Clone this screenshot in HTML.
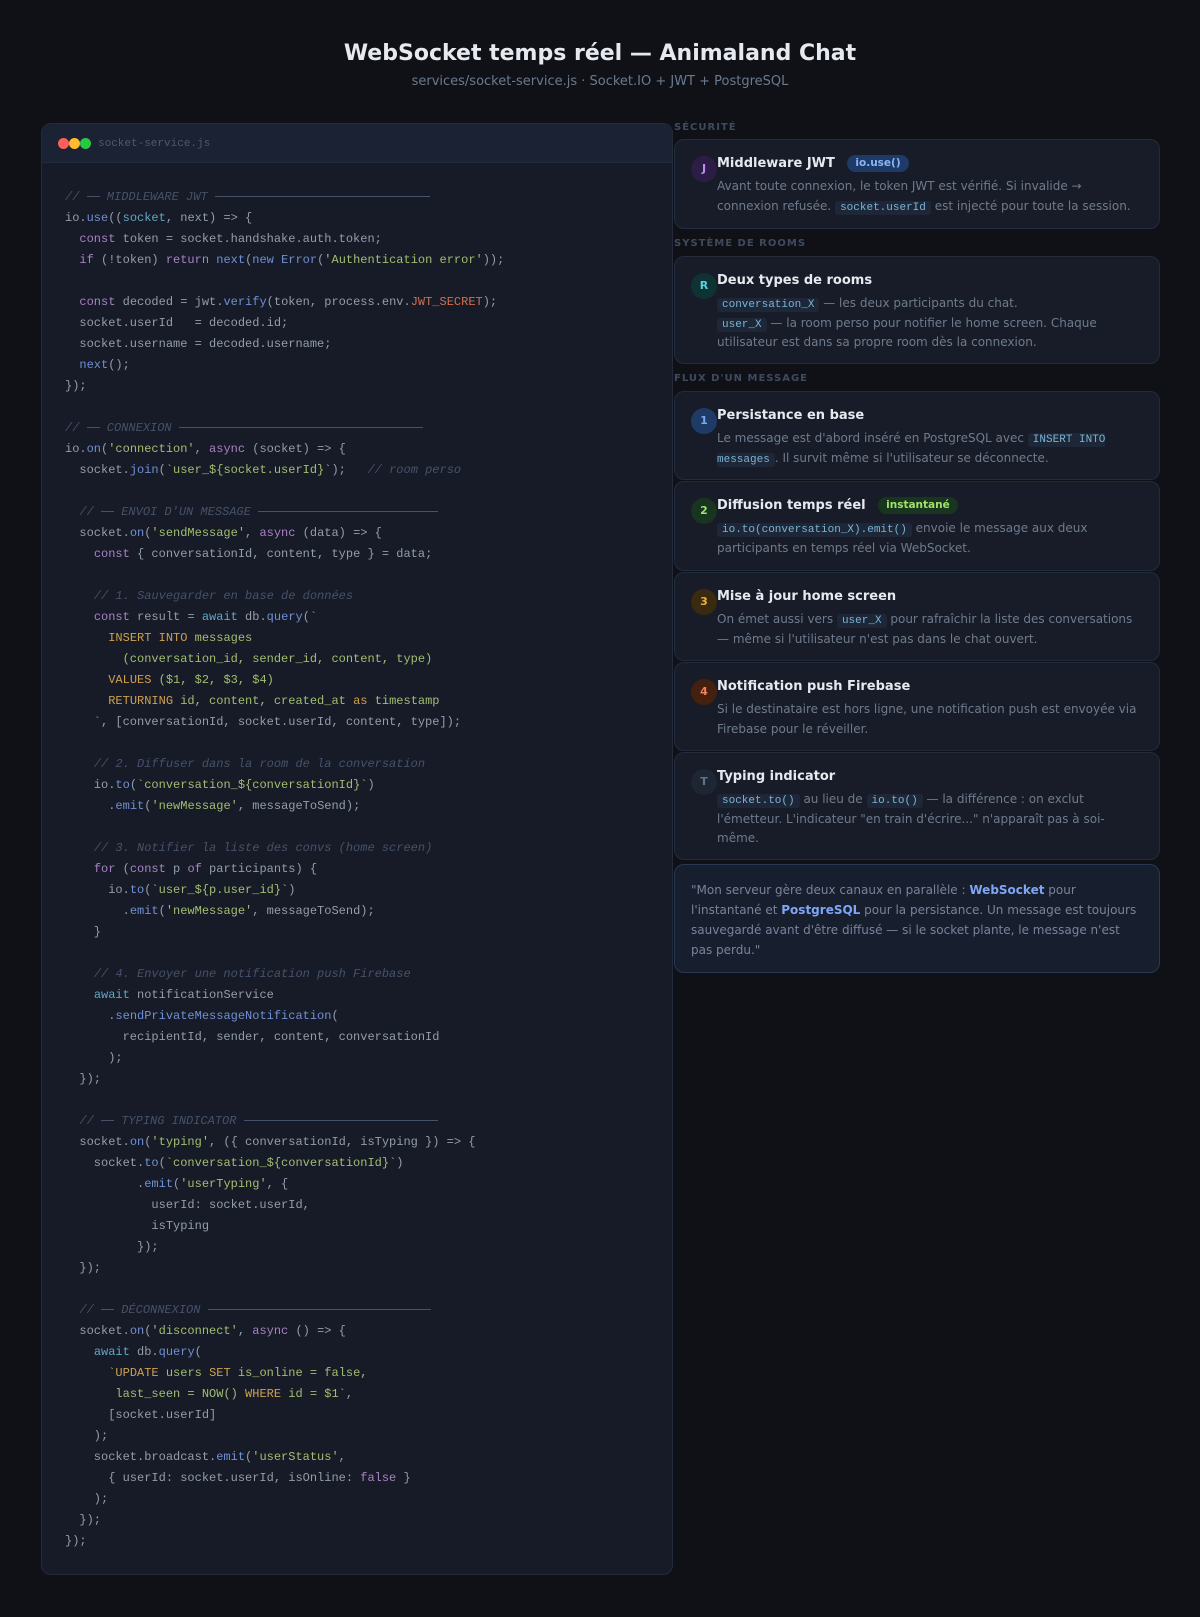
<!DOCTYPE html>
<html><head><meta charset="utf-8">
<style>
*{margin:0;padding:0;box-sizing:border-box}
body{width:1200px;height:1617px;background:#0f1117;font-family:"DejaVu Sans","Liberation Sans",sans-serif;position:relative;overflow:hidden}
h1{position:absolute;top:39px;left:0;width:1200px;text-align:center;font-size:22px;font-weight:bold;color:#e6e9ef;line-height:30px}
.sub{position:absolute;top:73px;left:0;width:1200px;text-align:center;font-size:13px;color:#6b7a8f;line-height:18px}
.code{position:absolute;left:41px;top:123px;width:632px;height:1452px;background:#161b27;border:1px solid #232b3a;border-radius:10px;overflow:hidden}
.hd{height:39px;background:#1a2233;border-bottom:1px solid #222c3d;position:relative}
.dot{position:absolute;top:14px;width:11px;height:11px;border-radius:50%}
.fn{position:absolute;left:56px;top:12px;font-family:"Liberation Mono",monospace;font-size:11px;color:#4b5a6e;line-height:17px}
pre{position:absolute;left:23px;top:63px;font-family:"Liberation Mono",monospace;font-size:12px;line-height:21px;color:#949dab}
.k{color:#a882c4}.f{color:#7090d4}.s{color:#a3bd70}.q{color:#cfa050}.c{color:#46526a;font-style:italic}.v{color:#62a6c4}.r{color:#d06e52}
.ln{display:inline-block;height:1px;background:#46526a;vertical-align:middle}
.lab{position:absolute;left:674px;font-size:10px;font-weight:bold;letter-spacing:1px;color:#3f4b5d;line-height:12px}
.card{position:absolute;left:674px;width:486px;background:#171c28;border:1px solid #232c3b;border-radius:10px;padding:14px 16px 0 42px}
.av{position:absolute;left:16px;top:16px;width:26px;height:26px;border-radius:50%;font-size:11px;font-weight:bold;text-align:center;line-height:26px}
.t{font-size:13px;font-weight:bold;color:#e6e9ef;line-height:20px;height:20px;margin-bottom:3px;white-space:nowrap}
.d{font-size:12px;color:#6f7b8d;line-height:19.5px}
.b{display:inline-block;font-size:10.5px;font-weight:bold;padding:0 8px;border-radius:9px;line-height:17px;margin-left:8px;vertical-align:1px}
code{font-family:"Liberation Mono",monospace;font-size:11px;background:#1e2738;color:#78b4d4;padding:1px 5px;border-radius:3px;line-height:1}
.quote{position:absolute;left:674px;top:864px;width:486px;height:109px;background:#171e2e;border:1px solid #2a3752;border-radius:10px;padding:15px 16px;font-size:12px;line-height:20px;color:#78849a}
.quote b{color:#7fa6f5}
</style></head><body>
<h1>WebSocket temps réel — Animaland Chat</h1>
<div class="sub">services/socket-service.js · Socket.IO + JWT + PostgreSQL</div>

<div class="code">
<div class="hd"><span class="dot" style="left:16px;background:#ff5f57"></span><span class="dot" style="left:27px;background:#febc2e"></span><span class="dot" style="left:38px;background:#28c840"></span><span class="fn">socket-service.js</span></div>
<pre><span class="c">// <span class="ln" style="width:13px"></span> MIDDLEWARE JWT <span class="ln" style="width:215px"></span></span>
io.<span class="f">use</span>((<span class="v">socket</span>, next) =&gt; {
  <span class="k">const</span> token = socket.handshake.auth.token;
  <span class="k">if</span> (!token) <span class="k">return</span> <span class="f">next</span>(<span class="f">new</span> <span class="f">Error</span>(<span class="s">'Authentication error'</span>));

  <span class="k">const</span> decoded = jwt.<span class="f">verify</span>(token, process.env.<span class="r">JWT_SECRET</span>);
  socket.userId   = decoded.id;
  socket.username = decoded.username;
  <span class="f">next</span>();
});

<span class="c">// <span class="ln" style="width:13px"></span> CONNEXION <span class="ln" style="width:244px"></span></span>
io.<span class="f">on</span>(<span class="s">'connection'</span>, <span class="k">async</span> (socket) =&gt; {
  socket.<span class="f">join</span>(<span class="s">`user_${socket.userId}`</span>);   <span class="c">// room perso</span>

  <span class="c">// <span class="ln" style="width:13px"></span> ENVOI D'UN MESSAGE <span class="ln" style="width:180px"></span></span>
  socket.<span class="f">on</span>(<span class="s">'sendMessage'</span>, <span class="k">async</span> (data) =&gt; {
    <span class="k">const</span> { conversationId, content, type } = data;

    <span class="c">// 1. Sauvegarder en base de données</span>
    <span class="k">const</span> result = <span class="v">await</span> db.<span class="f">query</span>(`
      <span class="q">INSERT INTO</span> <span class="s">messages</span>
        <span class="s">(conversation_id, sender_id, content, type)</span>
      <span class="q">VALUES</span> <span class="s">($1, $2, $3, $4)</span>
      <span class="q">RETURNING</span> <span class="s">id, content, created_at</span> <span class="q">as</span> <span class="s">timestamp</span>
    `, [conversationId, socket.userId, content, type]);

    <span class="c">// 2. Diffuser dans la room de la conversation</span>
    io.<span class="f">to</span>(<span class="s">`conversation_${conversationId}`</span>)
      .<span class="f">emit</span>(<span class="s">'newMessage'</span>, messageToSend);

    <span class="c">// 3. Notifier la liste des convs (home screen)</span>
    <span class="k">for</span> (<span class="k">const</span> p <span class="k">of</span> participants) {
      io.<span class="f">to</span>(<span class="s">`user_${p.user_id}`</span>)
        .<span class="f">emit</span>(<span class="s">'newMessage'</span>, messageToSend);
    }

    <span class="c">// 4. Envoyer une notification push Firebase</span>
    <span class="v">await</span> notificationService
      .<span class="f">sendPrivateMessageNotification</span>(
        recipientId, sender, content, conversationId
      );
  });

  <span class="c">// <span class="ln" style="width:13px"></span> TYPING INDICATOR <span class="ln" style="width:194px"></span></span>
  socket.<span class="f">on</span>(<span class="s">'typing'</span>, ({ conversationId, isTyping }) =&gt; {
    socket.<span class="f">to</span>(<span class="s">`conversation_${conversationId}`</span>)
          .<span class="f">emit</span>(<span class="s">'userTyping'</span>, {
            userId: socket.userId,
            isTyping
          });
  });

  <span class="c">// <span class="ln" style="width:13px"></span> DÉCONNEXION <span class="ln" style="width:223px"></span></span>
  socket.<span class="f">on</span>(<span class="s">'disconnect'</span>, <span class="k">async</span> () =&gt; {
    <span class="v">await</span> db.<span class="f">query</span>(
      <span class="s">`</span><span class="q">UPDATE</span> <span class="s">users</span> <span class="q">SET</span> <span class="s">is_online = false,</span>
       <span class="s">last_seen = NOW()</span> <span class="q">WHERE</span> <span class="s">id = $1`</span>,
      [socket.userId]
    );
    socket.broadcast.<span class="f">emit</span>(<span class="s">'userStatus'</span>,
      { userId: socket.userId, isOnline: <span class="k">false</span> }
    );
  });
});</pre>
</div>

<div class="lab" style="top:122px">SÉCURITÉ</div>
<div class="card" style="top:139px;height:90px"><div class="av" style="background:#2b1d45;color:#c28cf0">J</div>
<div class="t">Middleware JWT <span class="b" style="background:#1e3a66;color:#8ab4f8">io.use()</span></div>
<div class="d">Avant toute connexion, le token JWT est vérifié. Si invalide → connexion refusée. <code>socket.userId</code> est injecté pour toute la session.</div></div>

<div class="lab" style="top:238px">SYSTÈME DE ROOMS</div>
<div class="card" style="top:256px;height:108px"><div class="av" style="background:#0f3232;color:#5ecfe0">R</div>
<div class="t">Deux types de rooms</div>
<div class="d"><code>conversation_X</code> — les deux participants du chat.<br><code>user_X</code> — la room perso pour notifier le home screen. Chaque utilisateur est dans sa propre room dès la connexion.</div></div>

<div class="lab" style="top:373px">FLUX D'UN MESSAGE</div>
<div class="card" style="top:391px;height:89px"><div class="av" style="background:#1e3a66;color:#7aaaf0">1</div>
<div class="t">Persistance en base</div>
<div class="d">Le message est d'abord inséré en PostgreSQL avec <code>INSERT INTO messages</code>. Il survit même si l'utilisateur se déconnecte.</div></div>

<div class="card" style="top:481px;height:90px"><div class="av" style="background:#17351f;color:#9be070">2</div>
<div class="t">Diffusion temps réel <span class="b" style="background:#17351f;color:#a3e06a">instantané</span></div>
<div class="d"><code>io.to(conversation_X).emit()</code> envoie le message aux deux participants en temps réel via WebSocket.</div></div>

<div class="card" style="top:572px;height:89px"><div class="av" style="background:#3a2a10;color:#f0b040">3</div>
<div class="t">Mise à jour home screen</div>
<div class="d">On émet aussi vers <code>user_X</code> pour rafraîchir la liste des conversations — même si l'utilisateur n'est pas dans le chat ouvert.</div></div>

<div class="card" style="top:662px;height:89px"><div class="av" style="background:#45200f;color:#f08060">4</div>
<div class="t">Notification push Firebase</div>
<div class="d">Si le destinataire est hors ligne, une notification push est envoyée via Firebase pour le réveiller.</div></div>

<div class="card" style="top:752px;height:108px"><div class="av" style="background:#1e2533;color:#64748b">T</div>
<div class="t">Typing indicator</div>
<div class="d"><code>socket.to()</code> au lieu de <code>io.to()</code> — la différence : on exclut l'émetteur. L'indicateur "en train d'écrire..." n'apparaît pas à soi-même.</div></div>

<div class="quote">"Mon serveur gère deux canaux en parallèle : <b>WebSocket</b> pour l'instantané et <b>PostgreSQL</b> pour la persistance. Un message est toujours sauvegardé avant d'être diffusé — si le socket plante, le message n'est pas perdu."</div>
</body></html>
